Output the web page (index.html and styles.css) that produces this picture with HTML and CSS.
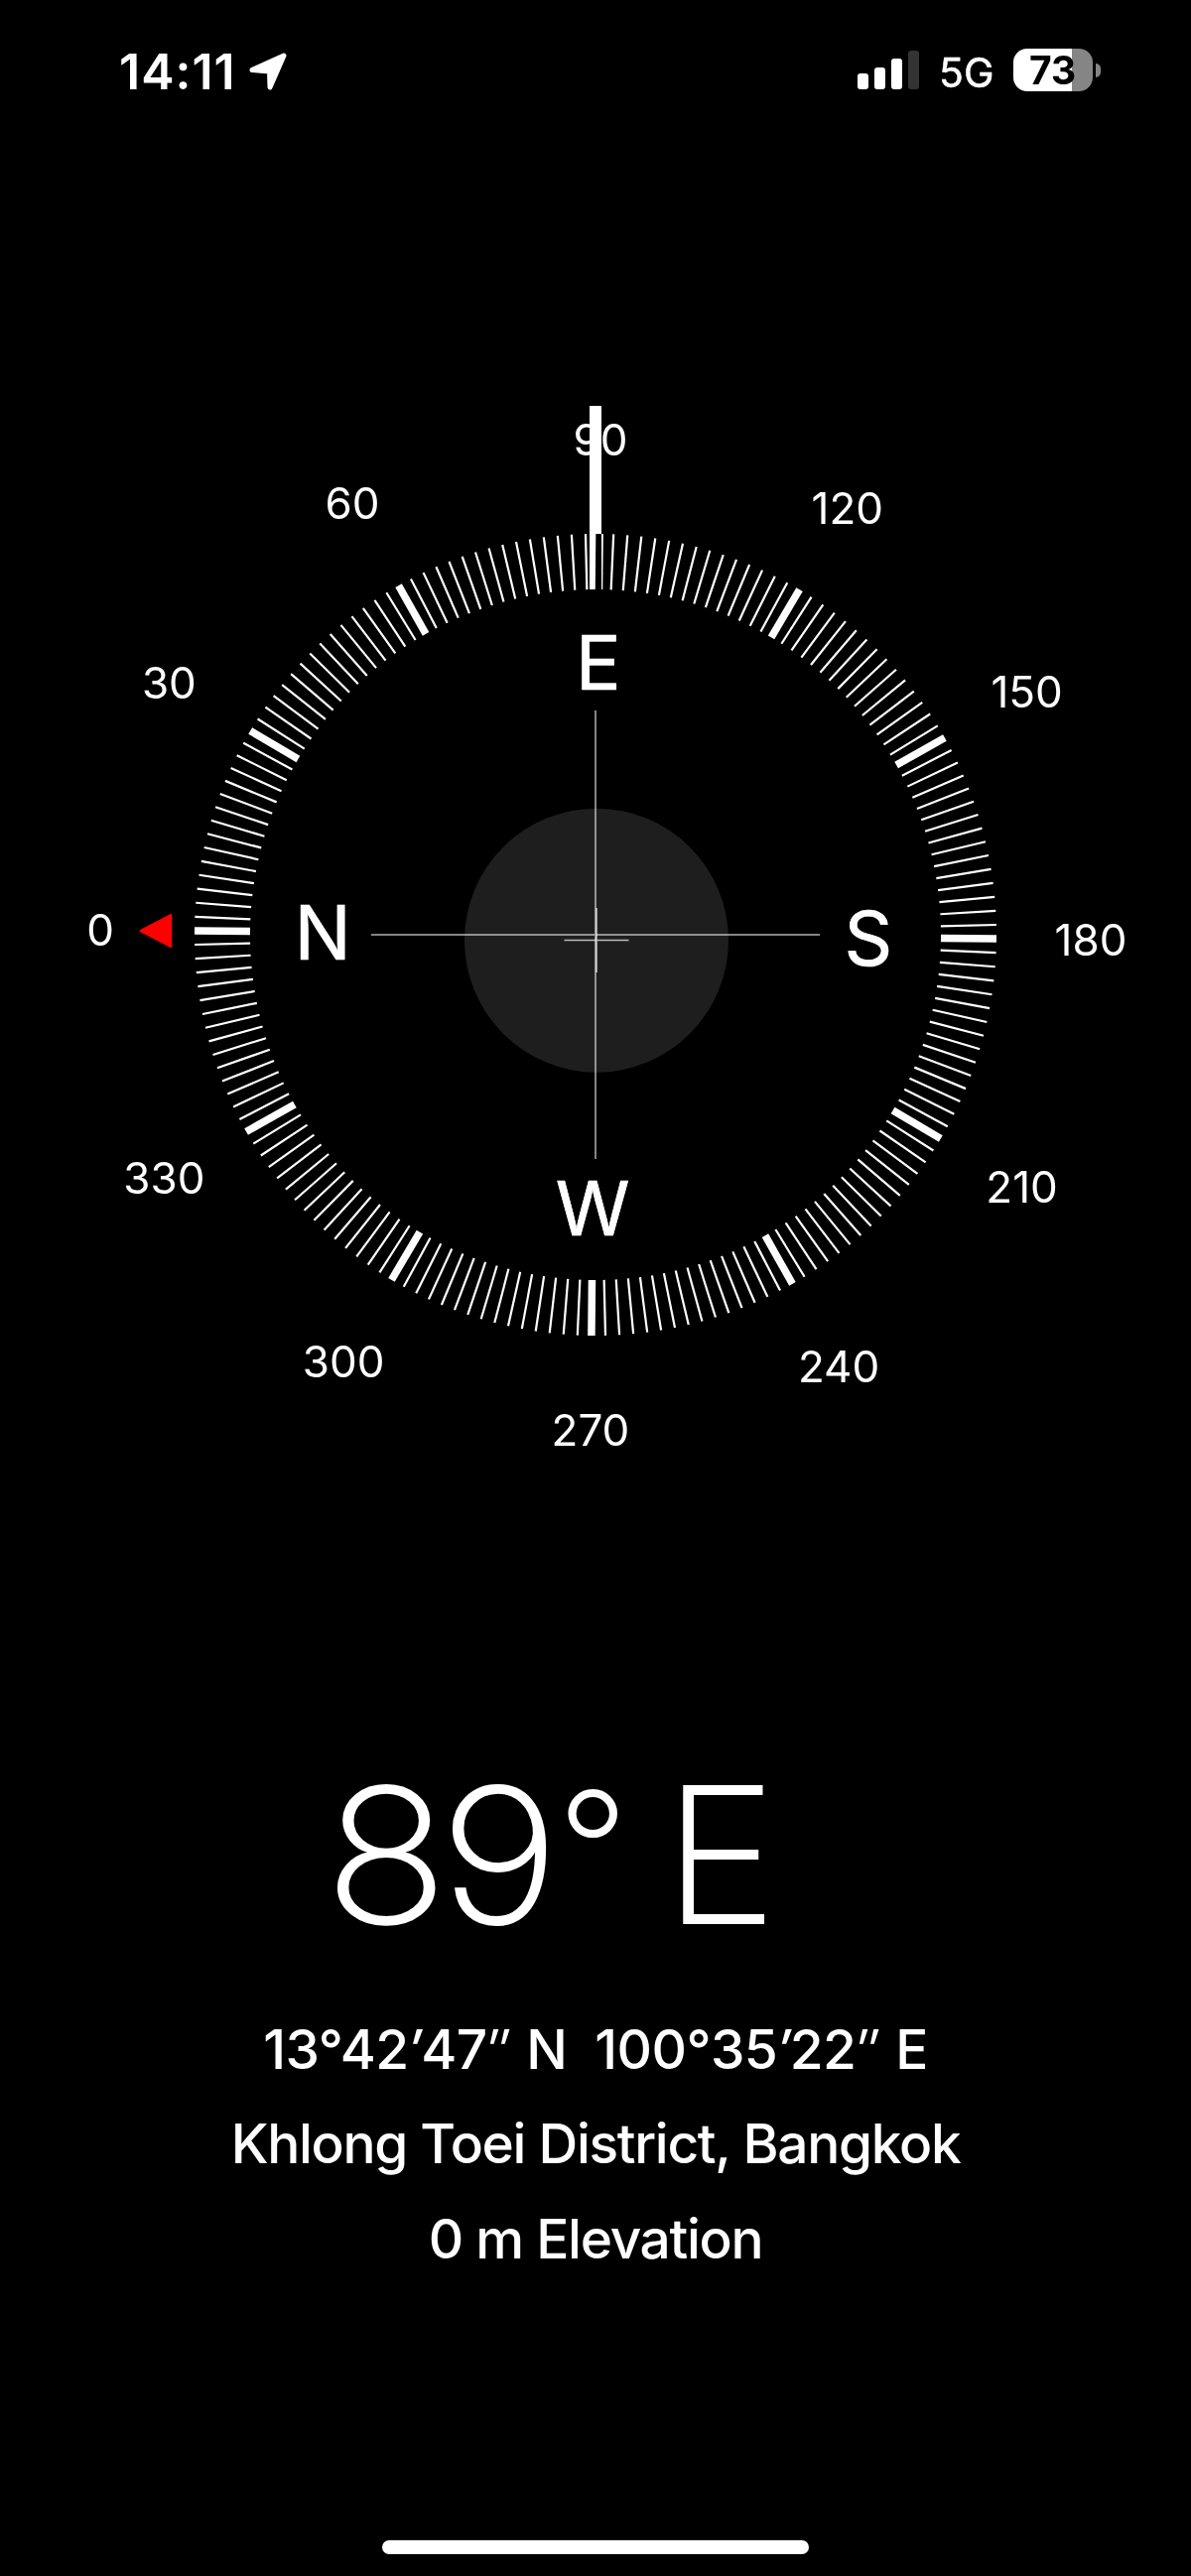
FILE: index.html
```
<!DOCTYPE html>
<html lang="en">
<head>
    <meta charset="UTF-8">
    <meta name="viewport" content="width=device-width, initial-scale=1.0">
    <title>Compass</title>
    <link rel="stylesheet" href="styles.css">
</head>
<body>
    <header class="status-bar">
        <div class="status-left">
            <span class="time">14:11</span>
            <svg class="location" width="40" height="40" viewBox="0 0 40 40">
                <path d="M4 18.5 L36 4 L22 36 L21.500 20 Z" />
            </svg>
        </div>
        <div class="status-right">
            <div class="signal">
                <span class="bar bar-1"></span>
                <span class="bar bar-2"></span>
                <span class="bar bar-3"></span>
                <span class="bar bar-4"></span>
            </div>
            <span class="network">5G</span>
            <div class="battery">73</div>
            <span class="battery-cap"></span>
        </div>
    </header>

    <main>
        <svg class="compass" viewBox="-600 -642 1200 1284">
            <circle class="level" cx="1" cy="5.700" r="133" />
            <g id="ticks"></g>
            <g id="degrees"></g>
            <g id="directions"></g>
            <path class="north" d="M-458.500 -4 L-427.700 -20 L-427.700 12 Z" />
            <path class="crosshair" d="M-226 0 H226 M0 -226 V226" />
            <path class="level-cross" d="M-31.500 5.500 H33.500 M1 -27 V38" />
            <rect class="pointer" x="-6" y="-533" width="12" height="129" />
            <rect class="pointer pointer-invert" x="-6" y="-404" width="12" height="56" />
        </svg>

        <h1 class="heading">
            <span class="digit">8</span><span class="digit">9</span><span class="deg">°</span><span class="dir">E</span>
        </h1>
        <div class="info">
            <p class="coords">13°42<i>′</i>47<i class="seconds">″</i> N&nbsp; 100°35<i>′</i>22<i class="seconds">″</i> E</p>
            <p class="place">Khlong Toei District, Bangkok</p>
            <p class="elevation">0 m Elevation</p>
        </div>
    </main>

    <div class="home-indicator"></div>

    <script>
        const heading = 89.42;
        const svgNS = 'http://www.w3.org/2000/svg';
        const ticks = document.getElementById('ticks');

        // One tick every 2 degrees, a thick one every 30
        for (let a = 0; a < 360; a += 2) {
            const line = document.createElementNS(svgNS, 'line');
            line.setAttribute('y1', -404);
            line.setAttribute('y2', -348);
            line.setAttribute('class', a % 30 === 0 ? 'tick major' : 'tick');
            line.setAttribute('transform', `rotate(${a - heading})`);
            ticks.appendChild(line);
        }

        // Labels stay upright while the dial turns
        function addLabel(groupId, text, angle, radius, shift) {
            const rad = (angle - heading) * Math.PI / 180;
            const label = document.createElementNS(svgNS, 'text');
            label.setAttribute('x', (Math.sin(rad) * radius).toFixed(2));
            label.setAttribute('y', (-Math.cos(rad) * radius + shift).toFixed(2));
            label.textContent = text;
            document.getElementById(groupId).appendChild(label);
        }

        for (let a = 0; a < 360; a += 30) {
            addLabel('degrees', a, a, 499, 16);
        }
        ['N', 'E', 'S', 'W'].forEach((d, i) => addLabel('directions', d, i * 90, 275, 28));
    </script>
</body>
</html>
```
FILE: styles.css
```
* {
    box-sizing: border-box;
}
body {
    margin: 0;
    width: 1200px;
    height: 2596px;
    display: flex;
    flex-direction: column;
    background-color: #000;
    color: #fff;
    font-family: Inter, "Liberation Sans", sans-serif;
}
.status-bar {
    display: flex;
    justify-content: space-between;
    height: 130px;
    padding: 49px 91px 0 120px;
}
.status-left,
.status-right {
    display: flex;
    align-items: flex-start;
}
.time {
    font-size: 50px;
    font-weight: 600;
    line-height: 47px;
    width: 130px;
    letter-spacing: 1px;
}
.location {
    margin-top: 3px;
}
.location path {
    fill: #fff;
    stroke: #fff;
    stroke-width: 5;
    stroke-linejoin: round;
}
.signal {
    display: flex;
    align-items: flex-end;
    gap: 6px;
    height: 41px;
}
.bar {
    width: 11px;
    border-radius: 3px;
    background-color: #fff;
}
.bar-1 {
    height: 16px;
}
.bar-2 {
    height: 22px;
}
.bar-3 {
    height: 31px;
}
.bar-4 {
    height: 39px;
    background-color: #333;
}
.network {
    width: 75px;
    margin-left: 20px;
    font-size: 41px;
    line-height: 48px;
    -webkit-text-stroke: 0.5px #fff;
}
.battery {
    width: 80px;
    height: 43px;
    border-radius: 14px;
    background: linear-gradient(to right, #fff 59px, #858585 59px);
    color: #000;
    font-size: 39px;
    font-weight: 700;
    line-height: 43px;
    padding-left: 16px;
}
.battery-cap {
    width: 5px;
    height: 14px;
    margin: 15px 0 0 3px;
    border-radius: 0 5px 5px 0;
    background-color: #858585;
}
.compass {
    display: block;
    width: 1200px;
    height: 1284px;
    margin-top: 170px;
}
.compass text {
    fill: #fff;
    text-anchor: middle;
}
.tick {
    stroke: #fff;
    stroke-width: 2.2;
}
.tick.major {
    stroke-width: 7.5;
}
#degrees {
    font-size: 44px;
}
#directions {
    font-size: 76px;
    stroke: #fff;
    stroke-width: 0.7;
}
.level {
    fill: #1e1e1e;
}
.crosshair {
    stroke: #fff;
    stroke-opacity: 0.52;
    stroke-width: 2;
}
.level-cross {
    stroke: #fff;
    stroke-opacity: 0.7;
    stroke-width: 1.6;
}
.north {
    fill: #f00;
    stroke: #f00;
    stroke-width: 2;
    stroke-linejoin: round;
}
.pointer {
    fill: #fff;
}
.pointer-invert {
    mix-blend-mode: difference;
}
.heading {
    display: flex;
    height: 230px;
    margin: 171px 0 0 327px;
    font-size: 189px;
    font-weight: 200;
    line-height: 230px;
    -webkit-text-stroke: 1.8px #fff;
}
.heading .digit {
    width: 116px;
    transform: scaleX(1.09);
    transform-origin: left;
}
.heading .deg {
    width: 110px;
    padding-left: 3px;
    font-size: 155px;
    line-height: 214px;
}
.heading .dir {
    transform: scaleX(1.02);
    transform-origin: left;
}
.info {
    margin-top: 33px;
    text-align: center;
    font-size: 55px;
    font-weight: 500;
    line-height: 95.33px;
    letter-spacing: -1.3px;
}
.info p {
    margin: 0;
}
.info .coords {
    letter-spacing: -0.6px;
}
.seconds {
    display: inline-block;
    transform: scaleX(0.85);
    transform-origin: left;
}
.home-indicator {
    width: 430px;
    height: 14px;
    margin: auto auto 22px;
    border-radius: 7px;
    background-color: #fff;
}
```
